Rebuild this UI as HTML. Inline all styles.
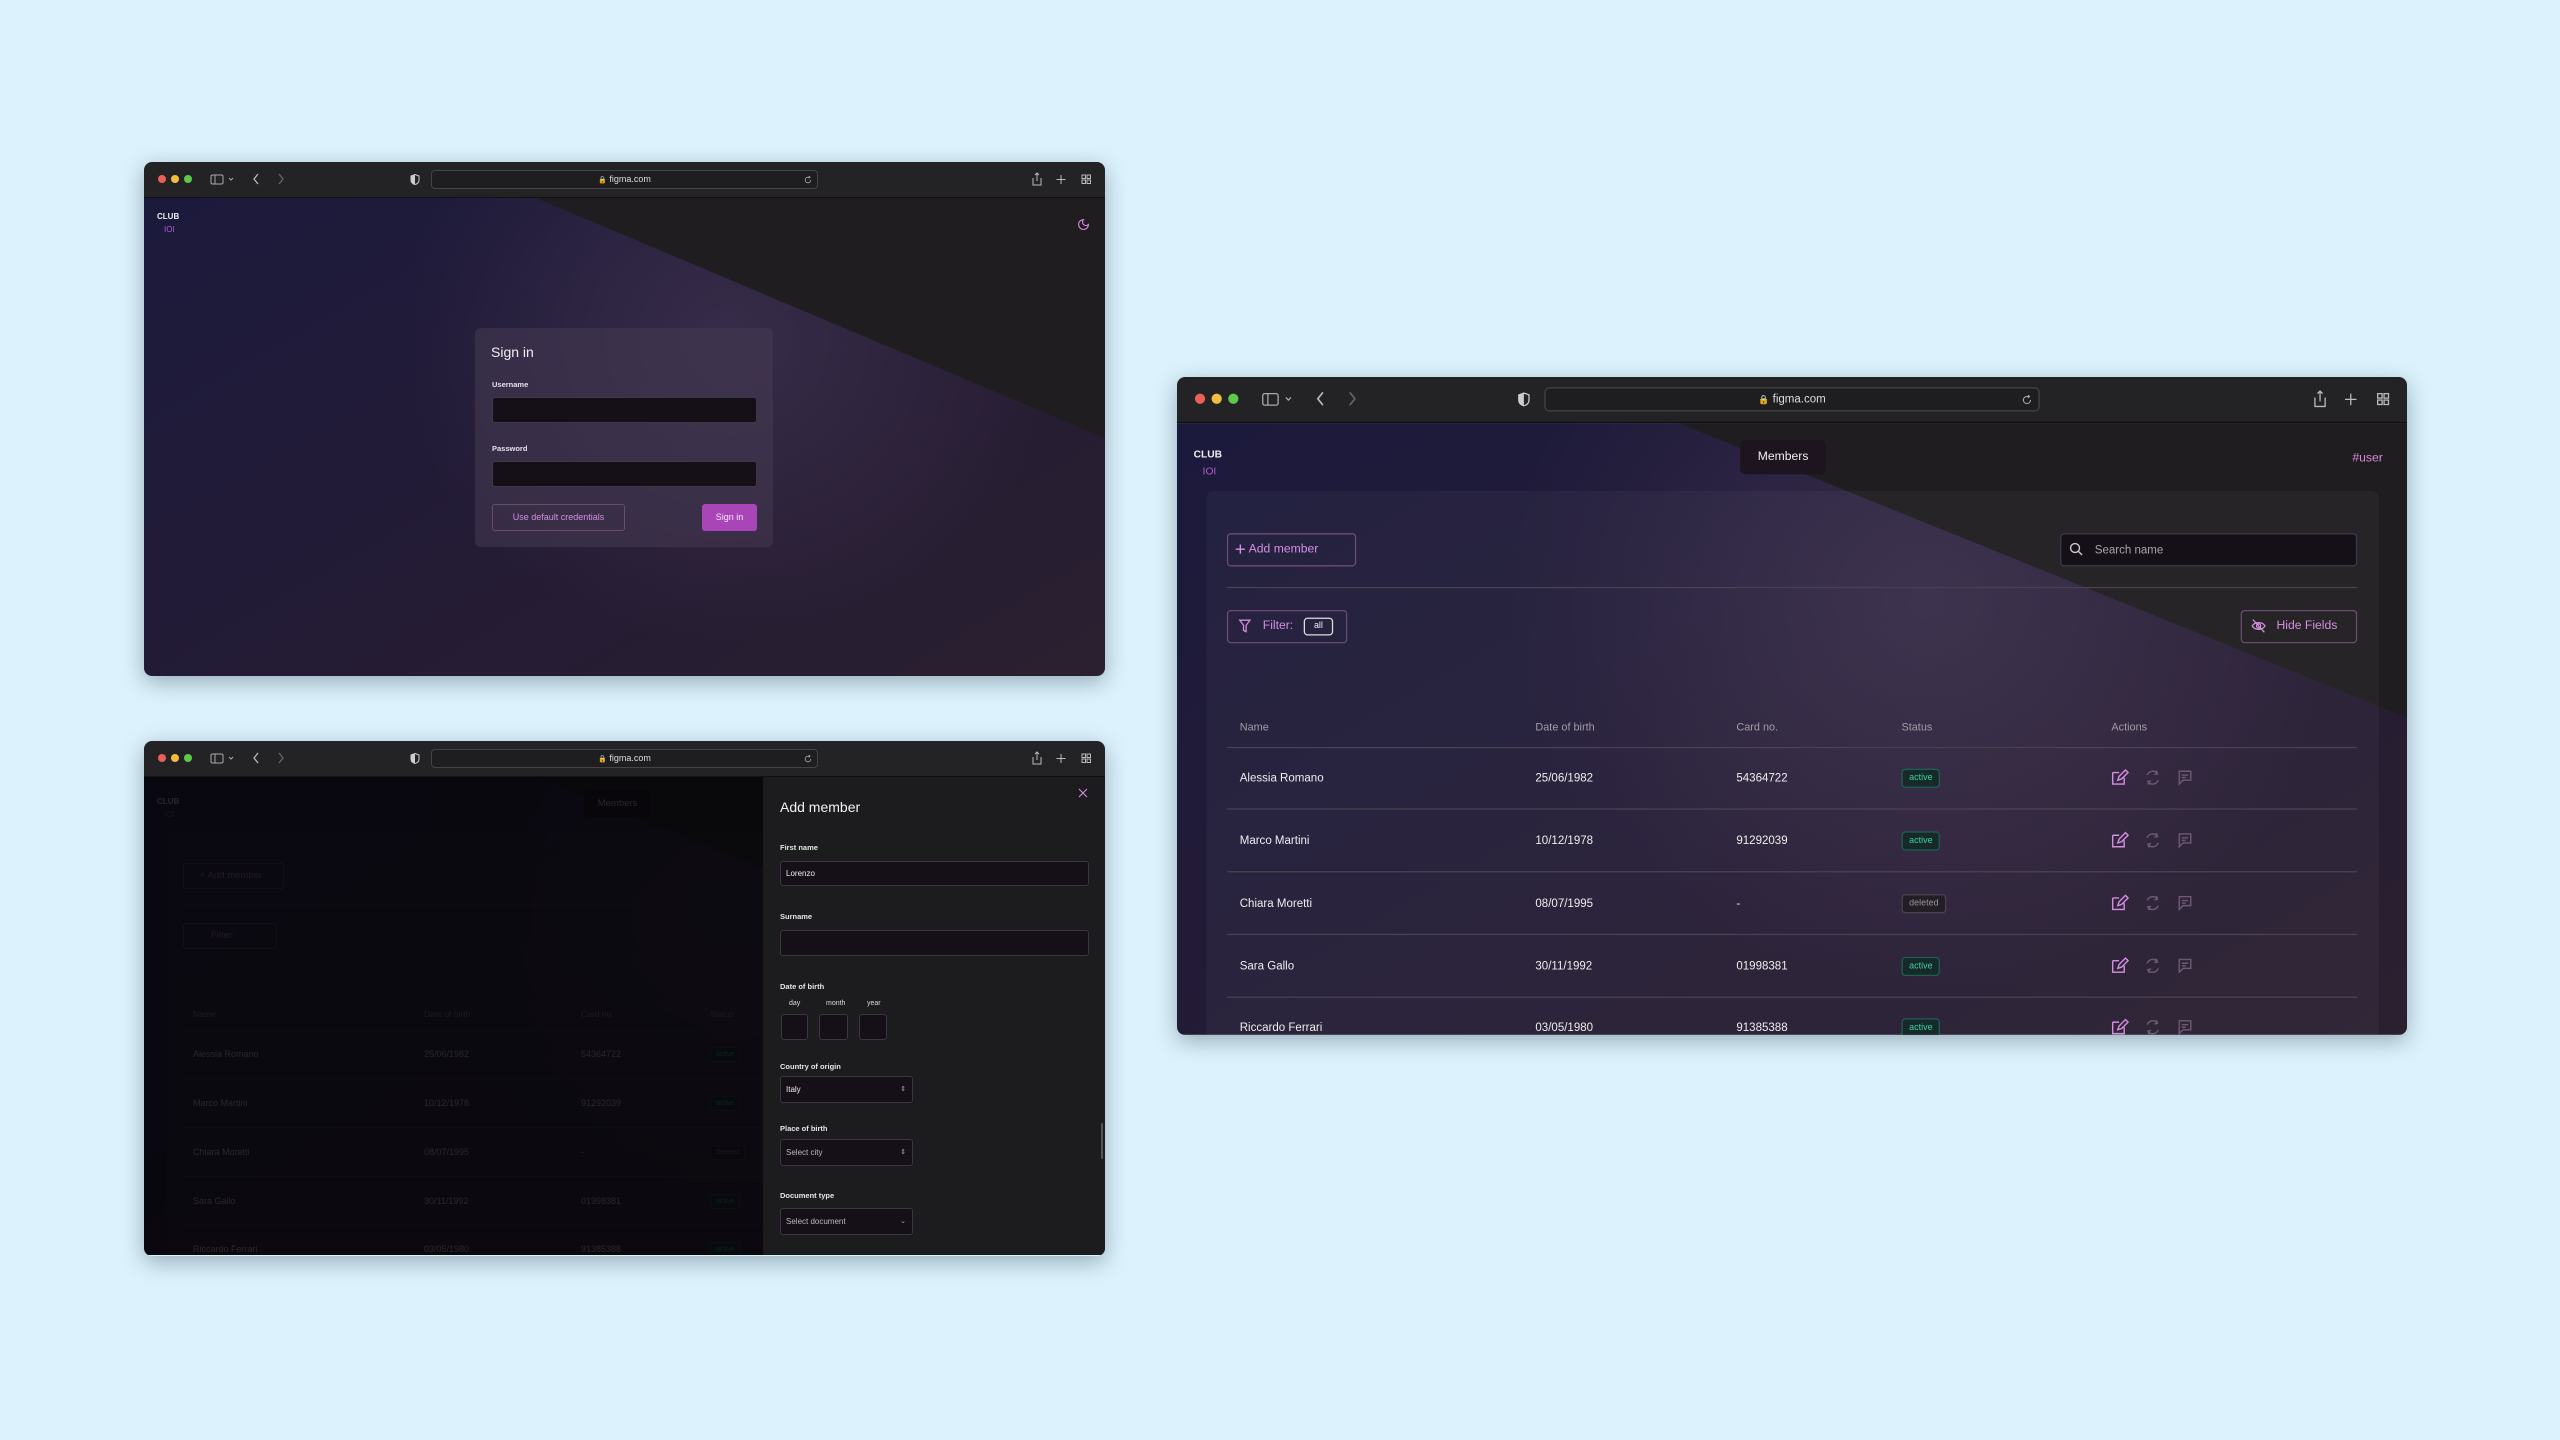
<!DOCTYPE html>
<html><head><meta charset="utf-8">
<style>
*{margin:0;padding:0;box-sizing:border-box}
body{width:2560px;height:1440px;background:#dcf2fc;font-family:"Liberation Sans",sans-serif;position:relative;overflow:hidden}
.win{position:absolute;border-radius:8px;overflow:hidden;box-shadow:0 6px 22px rgba(20,40,60,.35)}
.inner{position:absolute;left:0;top:0;width:961px;height:514px;overflow:hidden}
.tb{position:absolute;left:0;top:0;width:961px;height:36px;background:#232325;border-bottom:1px solid #111}
.dot{position:absolute;top:13px;width:8px;height:8px;border-radius:50%}
.url{position:absolute;left:287px;top:8px;width:387px;height:19px;border:1px solid #444;border-radius:4px;background:#1e1e20;color:#ddd;font-size:9px;text-align:center;line-height:17px}
.ab{position:absolute}
.content{position:absolute;left:0;top:36px;width:961px;height:478px;overflow:hidden;background:linear-gradient(150deg,#1c1a3c 0%,#211b38 35%,#261c33 65%,#2a2030 100%)}
.glow{position:absolute;left:200px;top:-100px;width:700px;height:600px;background:radial-gradient(ellipse at 55% 40%,rgba(80,65,95,.45),rgba(0,0,0,0) 60%)}
.dark{position:absolute;left:0;top:0;width:961px;height:478px;background:#1f1d20;clip-path:polygon(392px 0,961px 0,961px 230px)}
.logo1{position:absolute;left:13px;top:14px;font-size:8px;font-weight:bold;color:#eee}
.logo2{position:absolute;left:20px;top:27px;font-size:8px;color:#b25ccc}
.t{position:absolute;white-space:nowrap}
.badge{position:absolute;height:15px;border-radius:3px;font-size:7px;line-height:13px;padding:0 5px}
.act{color:#3dcfa0;border:1px solid #1f5e54;background:#172a2a}
.del{color:#9a949c;border:1px solid #4a4450;background:#231e26}
.line{position:absolute;left:39px;width:883px;height:1px;background:#4a4250}
</style></head><body>

<!-- ===== Window 1 : Sign in ===== -->
<div class="win" style="left:144px;top:162px;width:961px;height:514px">
<div class="inner">
 <div class="content" style="top:36px">
  <div class="glow"></div>
  <div class="dark" style="clip-path:polygon(392px 0,961px 0,961px 240px)"></div>
  <div class="logo1">CLUB</div><div class="logo2">IOI</div>
  <svg class="ab" style="left:933px;top:20px" width="13" height="13" viewBox="0 0 24 24" fill="none" stroke="#d88ae0" stroke-width="2"><path d="M12 3a6 6 0 0 0 9 9 9 9 0 1 1-9-9z"/></svg>
  <div class="ab" style="left:331px;top:130px;width:298px;height:219px;border-radius:6px;background:rgba(70,58,82,.55)">
   <div class="t" style="left:16px;top:16px;font-size:14px;color:#f0eef2">Sign in</div>
   <div class="t" style="left:17px;top:52px;font-size:7.5px;font-weight:bold;color:#e6e2ea">Username</div>
   <div class="ab" style="left:17px;top:69px;width:265px;height:26px;border-radius:3px;background:#151018;border:1px solid #3f3746"></div>
   <div class="t" style="left:17px;top:116px;font-size:7.5px;font-weight:bold;color:#e6e2ea">Password</div>
   <div class="ab" style="left:17px;top:133px;width:265px;height:26px;border-radius:3px;background:#151018;border:1px solid #3f3746"></div>
   <div class="ab" style="left:17px;top:176px;width:133px;height:27px;border-radius:3px;border:1px solid #6a4b74;color:#d58ee0;font-size:9px;text-align:center;line-height:25px">Use default credentials</div>
   <div class="ab" style="left:227px;top:176px;width:55px;height:27px;border-radius:3px;background:#a846b8;color:#f5e6f8;font-size:9px;text-align:center;line-height:27px">Sign in</div>
  </div>
 </div>
 <div class="tb">
  <div class="dot" style="left:14px;background:#ec5f57"></div><div class="dot" style="left:27px;background:#f3be3f"></div><div class="dot" style="left:40px;background:#5fc74a"></div>
  <svg class="ab" style="left:66px;top:12px" width="30" height="11" viewBox="0 0 30 11" fill="none" stroke="#aaa" stroke-width="1"><rect x="1" y="1" width="12" height="9" rx="1.5"/><path d="M5 1v9M19 4l2 2 2-2"/></svg>
  <svg class="ab" style="left:108px;top:11px" width="34" height="12" viewBox="0 0 34 12" fill="none" stroke-width="1.3"><path d="M6 1L2 6l4 5" stroke="#bbb"/><path d="M27 1l4 5-4 5" stroke="#666"/></svg>
  <svg class="ab" style="left:266px;top:12px" width="10" height="11" viewBox="0 0 10 11"><path d="M5 .5L9 2v4c0 2.5-2 4-4 4.5C3 10 1 8.5 1 6V2z" fill="none" stroke="#ccc"/><path d="M5 .5V10.5C3 10 1 8.5 1 6V2z" fill="#ccc"/></svg>
  <div class="url"><span style="font-size:7px">🔒</span> figma.com<svg class="ab" style="right:5px;top:5px" width="8" height="8" viewBox="0 0 10 10" fill="none" stroke="#aaa"><path d="M8.5 5A3.5 3.5 0 1 1 5 1.5h2M6 0l1.5 1.5L6 3"/></svg></div>
  <svg class="ab" style="left:886px;top:10px" width="62" height="14" viewBox="0 0 62 14" fill="none" stroke="#bbb" stroke-width="1"><path d="M3 6v7h8V6M7 9V1M5 3l2-2 2 2"/><path d="M31 3v9M26.5 7.5h9"/><rect x="52" y="3" width="3.5" height="3.5"/><rect x="57" y="3" width="3.5" height="3.5"/><rect x="52" y="8" width="3.5" height="3.5"/><rect x="57" y="8" width="3.5" height="3.5"/></svg>
 </div>
</div>
</div>

<!-- ===== Window 2 : Members ===== -->
<div class="win" style="left:1177px;top:377px;width:1230px;height:658px">
<div class="inner" style="transform:scale(1.28);transform-origin:0 0">
 <div class="content">
  <div class="glow"></div>
  <div class="dark"></div>
  <div class="logo1" style="top:20px">CLUB</div><div class="logo2" style="top:33px">IOI</div>
  <div class="ab" style="left:440px;top:13px;width:67px;height:27px;border-radius:4px;background:#1e1420;color:#eee;font-size:9.5px;text-align:center;line-height:27px">Members</div>
  <div class="t" style="right:19px;top:22px;font-size:9.5px;color:#d68ad8">#user</div>
  <div class="ab" style="left:23px;top:53px;width:916px;height:440px;border-radius:6px;background:rgba(255,255,255,.035)"></div>
  <div class="ab" style="left:39px;top:86px;width:101px;height:26px;border-radius:3px;border:1px solid #6a4b74;color:#d58ee0;font-size:9.5px;line-height:24px;padding-left:16px">Add member</div>
  <svg class="ab" style="left:45px;top:94px" width="9" height="9" viewBox="0 0 10 10" stroke="#d58ee0" stroke-width="1.2"><path d="M5 1v8M1 5h8"/></svg>
  <div class="ab" style="left:690px;top:86px;width:232px;height:26px;border-radius:3px;background:#150f17;border:1px solid #3f3746;color:#aaa3ae;font-size:9px;line-height:24px;padding-left:26px">Search name</div>
  <svg class="ab" style="left:697px;top:93px" width="11" height="11" viewBox="0 0 12 12" fill="none" stroke="#ccc" stroke-width="1.2"><circle cx="5" cy="5" r="3.8"/><path d="M8 8l3 3"/></svg>
  <div class="line" style="top:128px"></div>
  <div class="ab" style="left:39px;top:146px;width:94px;height:26px;border-radius:3px;border:1px solid #6a4b74;color:#d58ee0;font-size:9.5px;line-height:24px;padding-left:27px">Filter:</div>
  <svg class="ab" style="left:48px;top:153px" width="10" height="11" viewBox="0 0 10 11" fill="none" stroke="#d58ee0" stroke-width="1"><path d="M1 1h8L6 5v5L4 9V5z"/></svg>
  <div class="ab" style="left:99px;top:152px;width:23px;height:14px;border-radius:3px;border:1px solid #ddd;color:#eee;font-size:7px;text-align:center;line-height:12px">all</div>
  <div class="ab" style="left:831px;top:146px;width:91px;height:26px;border-radius:3px;border:1px solid #6a4b74;color:#d58ee0;font-size:9.5px;line-height:24px;padding-left:27px">Hide Fields</div>
  <svg class="ab" style="left:839px;top:153px" width="12" height="11" viewBox="0 0 12 11" fill="none" stroke="#d58ee0" stroke-width="1"><path d="M1 5.5C3 2 9 2 11 5.5 9 9 3 9 1 5.5z"/><circle cx="6" cy="5.5" r="1.6"/><path d="M1.5 .5l9 10"/></svg>
  <div class="t" style="left:49px;top:232px;font-size:8.5px;color:#a39ca8">Name</div>
  <div class="t" style="left:280px;top:232px;font-size:8.5px;color:#a39ca8">Date of birth</div>
  <div class="t" style="left:437px;top:232px;font-size:8.5px;color:#a39ca8">Card no.</div>
  <div class="t" style="left:566px;top:232px;font-size:8.5px;color:#a39ca8">Status</div>
  <div class="t" style="left:730px;top:232px;font-size:8.5px;color:#a39ca8">Actions</div>
  <div class="line" style="top:253px"></div>
  <!-- rows -->
  <div class="t" style="left:49px;top:272px;font-size:9px;color:#eee">Alessia Romano</div><div class="t" style="left:280px;top:272px;font-size:9px;color:#eee">25/06/1982</div><div class="t" style="left:437px;top:272px;font-size:9px;color:#eee">54364722</div><div class="badge act" style="left:566px;top:270px">active</div>
  <div class="line" style="top:301px"></div>
  <div class="t" style="left:49px;top:321px;font-size:9px;color:#eee">Marco Martini</div><div class="t" style="left:280px;top:321px;font-size:9px;color:#eee">10/12/1978</div><div class="t" style="left:437px;top:321px;font-size:9px;color:#eee">91292039</div><div class="badge act" style="left:566px;top:319px">active</div>
  <div class="line" style="top:350px"></div>
  <div class="t" style="left:49px;top:370px;font-size:9px;color:#eee">Chiara Moretti</div><div class="t" style="left:280px;top:370px;font-size:9px;color:#eee">08/07/1995</div><div class="t" style="left:437px;top:370px;font-size:9px;color:#eee">-</div><div class="badge del" style="left:566px;top:368px">deleted</div>
  <div class="line" style="top:399px"></div>
  <div class="t" style="left:49px;top:419px;font-size:9px;color:#eee">Sara Gallo</div><div class="t" style="left:280px;top:419px;font-size:9px;color:#eee">30/11/1992</div><div class="t" style="left:437px;top:419px;font-size:9px;color:#eee">01998381</div><div class="badge act" style="left:566px;top:417px">active</div>
  <div class="line" style="top:448px"></div>
  <div class="t" style="left:49px;top:467px;font-size:9px;color:#eee">Riccardo Ferrari</div><div class="t" style="left:280px;top:467px;font-size:9px;color:#eee">03/05/1980</div><div class="t" style="left:437px;top:467px;font-size:9px;color:#eee">91385388</div><div class="badge act" style="left:566px;top:465px">active</div>
  <svg class="ab" style="left:729px;top:270px" width="70" height="210" viewBox="0 0 70 210" fill="none" stroke-width="1.1">
   <defs><g id="ic"><path d="M2 3h5M2 3v9h9V7" stroke="#d58ee0"/><path d="M6 9l1-3 5-5 2 2-5 5z" stroke="#d58ee0"/><path d="M29 5a4.5 4.5 0 0 1 8-1M37.5 9a4.5 4.5 0 0 1-8 1M36 1.5l1 2.5-2.5.5M30.5 12.5l-1-2.5 2.5-.5" stroke="#6e5a74"/><path d="M54 2h9v7h-6l-3 3z M56 5h5M56 7h3" stroke="#6e5a74"/></g></defs>
   <use href="#ic" y="0"/><use href="#ic" y="49"/><use href="#ic" y="98"/><use href="#ic" y="147"/><use href="#ic" y="195"/>
  </svg>
 </div>
 <div class="tb">
  <div class="dot" style="left:14px;background:#ec5f57"></div><div class="dot" style="left:27px;background:#f3be3f"></div><div class="dot" style="left:40px;background:#5fc74a"></div>
  <svg class="ab" style="left:66px;top:12px" width="30" height="11" viewBox="0 0 30 11" fill="none" stroke="#aaa" stroke-width="1"><rect x="1" y="1" width="12" height="9" rx="1.5"/><path d="M5 1v9M19 4l2 2 2-2"/></svg>
  <svg class="ab" style="left:108px;top:11px" width="34" height="12" viewBox="0 0 34 12" fill="none" stroke-width="1.3"><path d="M6 1L2 6l4 5" stroke="#bbb"/><path d="M27 1l4 5-4 5" stroke="#666"/></svg>
  <svg class="ab" style="left:266px;top:12px" width="10" height="11" viewBox="0 0 10 11"><path d="M5 .5L9 2v4c0 2.5-2 4-4 4.5C3 10 1 8.5 1 6V2z" fill="none" stroke="#ccc"/><path d="M5 .5V10.5C3 10 1 8.5 1 6V2z" fill="#ccc"/></svg>
  <div class="url"><span style="font-size:7px">🔒</span> figma.com<svg class="ab" style="right:5px;top:5px" width="8" height="8" viewBox="0 0 10 10" fill="none" stroke="#aaa"><path d="M8.5 5A3.5 3.5 0 1 1 5 1.5h2M6 0l1.5 1.5L6 3"/></svg></div>
  <svg class="ab" style="left:886px;top:10px" width="62" height="14" viewBox="0 0 62 14" fill="none" stroke="#bbb" stroke-width="1"><path d="M3 6v7h8V6M7 9V1M5 3l2-2 2 2"/><path d="M31 3v9M26.5 7.5h9"/><rect x="52" y="3" width="3.5" height="3.5"/><rect x="57" y="3" width="3.5" height="3.5"/><rect x="52" y="8" width="3.5" height="3.5"/><rect x="57" y="8" width="3.5" height="3.5"/></svg>
 </div>
</div>
</div>

<!-- ===== Window 3 : Add member drawer ===== -->
<div class="win" style="left:144px;top:741px;width:961px;height:515px">
<div class="inner">
 <div class="content">
  <div class="glow"></div>
  <div class="dark"></div>
  <div class="logo1" style="top:20px">CLUB</div><div class="logo2" style="top:33px">IOI</div>
  <div class="ab" style="left:440px;top:13px;width:67px;height:27px;border-radius:4px;background:#1e1420;color:#eee;font-size:9.5px;text-align:center;line-height:27px">Members</div>
  <div class="ab" style="left:23px;top:53px;width:916px;height:440px;border-radius:6px;background:rgba(255,255,255,.035)"></div>
  <div class="ab" style="left:39px;top:86px;width:101px;height:26px;border-radius:3px;border:1px solid #6a4b74;color:#d58ee0;font-size:9.5px;line-height:24px;padding-left:16px">+ Add member</div>
  <div class="line" style="top:128px"></div>
  <div class="ab" style="left:39px;top:146px;width:94px;height:26px;border-radius:3px;border:1px solid #6a4b74;color:#d58ee0;font-size:9.5px;line-height:24px;padding-left:27px">Filter:</div>
  <div class="t" style="left:49px;top:232px;font-size:8.5px;color:#a39ca8">Name</div>
  <div class="t" style="left:280px;top:232px;font-size:8.5px;color:#a39ca8">Date of birth</div>
  <div class="t" style="left:437px;top:232px;font-size:8.5px;color:#a39ca8">Card no.</div>
  <div class="t" style="left:566px;top:232px;font-size:8.5px;color:#a39ca8">Status</div>
  <div class="line" style="top:253px"></div>
  <div class="t" style="left:49px;top:272px;font-size:9px;color:#eee">Alessia Romano</div><div class="t" style="left:280px;top:272px;font-size:9px;color:#eee">25/06/1982</div><div class="t" style="left:437px;top:272px;font-size:9px;color:#eee">54364722</div><div class="badge act" style="left:566px;top:270px">active</div>
  <div class="line" style="top:301px"></div>
  <div class="t" style="left:49px;top:321px;font-size:9px;color:#eee">Marco Martini</div><div class="t" style="left:280px;top:321px;font-size:9px;color:#eee">10/12/1978</div><div class="t" style="left:437px;top:321px;font-size:9px;color:#eee">91292039</div><div class="badge act" style="left:566px;top:319px">active</div>
  <div class="line" style="top:350px"></div>
  <div class="t" style="left:49px;top:370px;font-size:9px;color:#eee">Chiara Moretti</div><div class="t" style="left:280px;top:370px;font-size:9px;color:#eee">08/07/1995</div><div class="t" style="left:437px;top:370px;font-size:9px;color:#eee">-</div><div class="badge del" style="left:566px;top:368px">deleted</div>
  <div class="line" style="top:399px"></div>
  <div class="t" style="left:49px;top:419px;font-size:9px;color:#eee">Sara Gallo</div><div class="t" style="left:280px;top:419px;font-size:9px;color:#eee">30/11/1992</div><div class="t" style="left:437px;top:419px;font-size:9px;color:#eee">01998381</div><div class="badge act" style="left:566px;top:417px">active</div>
  <div class="line" style="top:448px"></div>
  <div class="t" style="left:49px;top:467px;font-size:9px;color:#eee">Riccardo Ferrari</div><div class="t" style="left:280px;top:467px;font-size:9px;color:#eee">03/05/1980</div><div class="t" style="left:437px;top:467px;font-size:9px;color:#eee">91385388</div><div class="badge act" style="left:566px;top:465px">active</div>
  <div class="ab" style="left:0;top:0;width:961px;height:478px;background:rgba(6,5,8,.86)"></div>
  <!-- drawer -->
  <div class="ab" style="left:619px;top:0;width:342px;height:478px;background:#1c1c1e">
   <svg class="ab" style="left:315px;top:11px" width="10" height="10" viewBox="0 0 10 10" stroke="#d88ae0" stroke-width="1.1"><path d="M1 1l8 8M9 1L1 9"/></svg>
   <div class="t" style="left:17px;top:22px;font-size:14px;color:#f2f2f2">Add member</div>
   <div class="t" style="left:17px;top:66px;font-size:7.5px;font-weight:bold;color:#e6e6e6">First name</div>
   <div class="ab" style="left:17px;top:84px;width:309px;height:25px;border-radius:3px;background:#150f17;border:1px solid #3d3640;color:#eee;font-size:8px;line-height:23px;padding-left:5px">Lorenzo</div>
   <div class="t" style="left:17px;top:135px;font-size:7.5px;font-weight:bold;color:#e6e6e6">Surname</div>
   <div class="ab" style="left:17px;top:153px;width:309px;height:26px;border-radius:3px;background:#150f17;border:1px solid #3d3640"></div>
   <div class="t" style="left:17px;top:205px;font-size:7.5px;font-weight:bold;color:#e6e6e6">Date of birth</div>
   <div class="t" style="left:26px;top:223px;font-size:7px;color:#ddd">day</div>
   <div class="t" style="left:63px;top:223px;font-size:7px;color:#ddd">month</div>
   <div class="t" style="left:104px;top:223px;font-size:7px;color:#ddd">year</div>
   <div class="ab" style="left:18px;top:237px;width:27px;height:26px;border-radius:3px;background:#150f17;border:1px solid #3d3640"></div>
   <div class="ab" style="left:56px;top:237px;width:29px;height:26px;border-radius:3px;background:#150f17;border:1px solid #3d3640"></div>
   <div class="ab" style="left:96px;top:237px;width:28px;height:26px;border-radius:3px;background:#150f17;border:1px solid #3d3640"></div>
   <div class="t" style="left:17px;top:285px;font-size:7.5px;font-weight:bold;color:#e6e6e6">Country of origin</div>
   <div class="ab" style="left:17px;top:299px;width:133px;height:27px;border-radius:3px;background:#150f17;border:1px solid #3d3640;color:#eee;font-size:8px;line-height:25px;padding-left:5px">Italy<span style="position:absolute;right:6px;font-size:7px;color:#aaa">⇕</span></div>
   <div class="t" style="left:17px;top:347px;font-size:7.5px;font-weight:bold;color:#e6e6e6">Place of birth</div>
   <div class="ab" style="left:17px;top:362px;width:133px;height:27px;border-radius:3px;background:#150f17;border:1px solid #3d3640;color:#bbb;font-size:8px;line-height:25px;padding-left:5px">Select city<span style="position:absolute;right:6px;font-size:7px;color:#aaa">⇕</span></div>
   <div class="t" style="left:17px;top:414px;font-size:7.5px;font-weight:bold;color:#e6e6e6">Document type</div>
   <div class="ab" style="left:17px;top:431px;width:133px;height:27px;border-radius:3px;background:#150f17;border:1px solid #3d3640;color:#bbb;font-size:8px;line-height:25px;padding-left:5px">Select document<span style="position:absolute;right:6px;font-size:7px;color:#aaa">⌄</span></div>
   <div class="ab" style="left:338px;top:346px;width:2px;height:36px;background:#555;border-radius:1px"></div>
  </div>
 </div>
 <div class="tb">
  <div class="dot" style="left:14px;background:#ec5f57"></div><div class="dot" style="left:27px;background:#f3be3f"></div><div class="dot" style="left:40px;background:#5fc74a"></div>
  <svg class="ab" style="left:66px;top:12px" width="30" height="11" viewBox="0 0 30 11" fill="none" stroke="#aaa" stroke-width="1"><rect x="1" y="1" width="12" height="9" rx="1.5"/><path d="M5 1v9M19 4l2 2 2-2"/></svg>
  <svg class="ab" style="left:108px;top:11px" width="34" height="12" viewBox="0 0 34 12" fill="none" stroke-width="1.3"><path d="M6 1L2 6l4 5" stroke="#bbb"/><path d="M27 1l4 5-4 5" stroke="#666"/></svg>
  <svg class="ab" style="left:266px;top:12px" width="10" height="11" viewBox="0 0 10 11"><path d="M5 .5L9 2v4c0 2.5-2 4-4 4.5C3 10 1 8.5 1 6V2z" fill="none" stroke="#ccc"/><path d="M5 .5V10.5C3 10 1 8.5 1 6V2z" fill="#ccc"/></svg>
  <div class="url"><span style="font-size:7px">🔒</span> figma.com<svg class="ab" style="right:5px;top:5px" width="8" height="8" viewBox="0 0 10 10" fill="none" stroke="#aaa"><path d="M8.5 5A3.5 3.5 0 1 1 5 1.5h2M6 0l1.5 1.5L6 3"/></svg></div>
  <svg class="ab" style="left:886px;top:10px" width="62" height="14" viewBox="0 0 62 14" fill="none" stroke="#bbb" stroke-width="1"><path d="M3 6v7h8V6M7 9V1M5 3l2-2 2 2"/><path d="M31 3v9M26.5 7.5h9"/><rect x="52" y="3" width="3.5" height="3.5"/><rect x="57" y="3" width="3.5" height="3.5"/><rect x="52" y="8" width="3.5" height="3.5"/><rect x="57" y="8" width="3.5" height="3.5"/></svg>
 </div>
</div>
</div>

</body></html>
